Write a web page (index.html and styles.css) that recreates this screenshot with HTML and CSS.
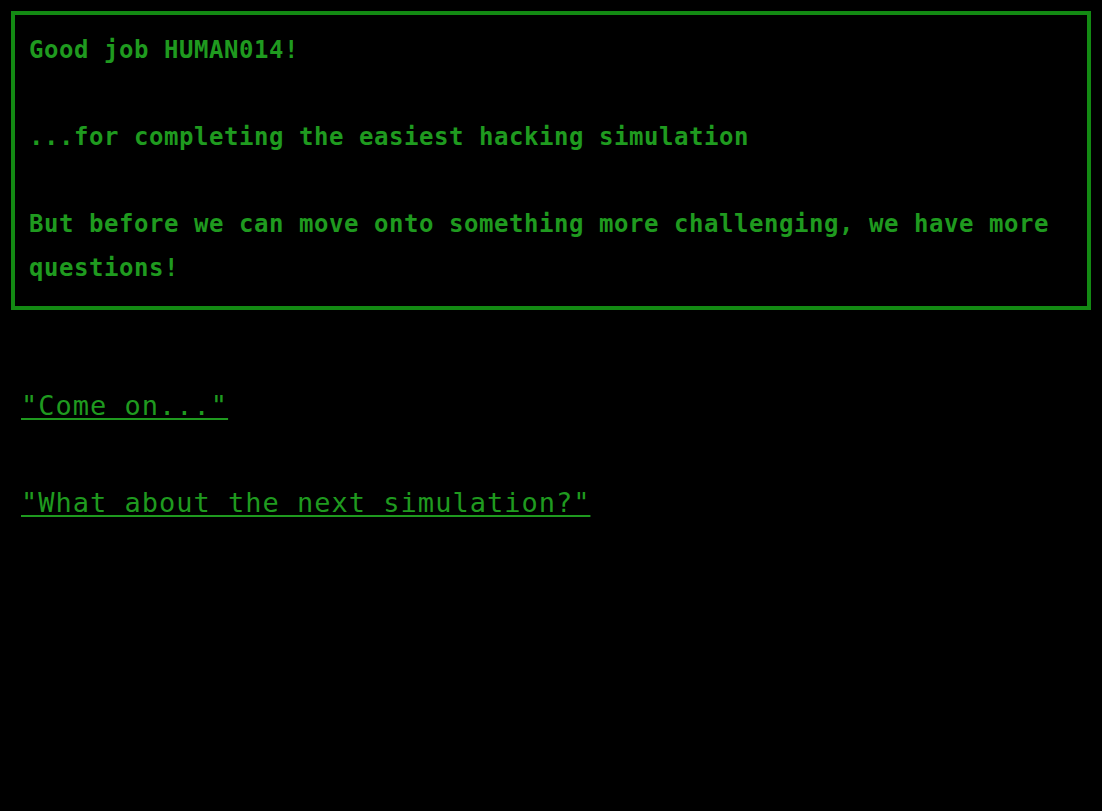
FILE: index.html
```html
<!DOCTYPE html>
<html>
<head>
<meta charset="utf-8">
<link rel="stylesheet" href="styles.css">
</head>
<body>
<div class="panel">
  <p class="line">Good job HUMAN014!</p>
  <p class="line">...for completing the easiest hacking simulation</p>
  <p class="line">But before we can move onto something more challenging, we have more questions!</p>
</div>
<div class="choices">
  <a class="choice" href="#">"Come on..."</a>
  <a class="choice" href="#">"What about the next simulation?"</a>
</div>
</body>
</html>
```
FILE: styles.css
```css
html, body {
  background: #000;
}
body {
  margin: 0;
  padding: 11px;
  font-family: "DejaVu Sans Mono", "Liberation Mono", monospace;
  color: #1f9a1f;
}
.panel {
  border: 4px solid #138a13;
  padding: 14px 14px 16px 14px;
}
.line {
  margin: 0;
  font-size: 24px;
  line-height: 43.5px;
  letter-spacing: 0.55px;
  font-weight: bold;
}
.line + .line {
  margin-top: 43.5px;
}
.choices {
  display: flex;
  flex-direction: column;
  align-items: flex-start;
  gap: 67px;
  margin-top: 81px;
  padding-left: 10px;
}
.choice {
  color: #1f9a1f;
  font-size: 27px;
  line-height: 30px;
  letter-spacing: 1px;
  text-decoration: underline;
  text-decoration-thickness: 2px;
  text-underline-offset: 3px;
}
```
